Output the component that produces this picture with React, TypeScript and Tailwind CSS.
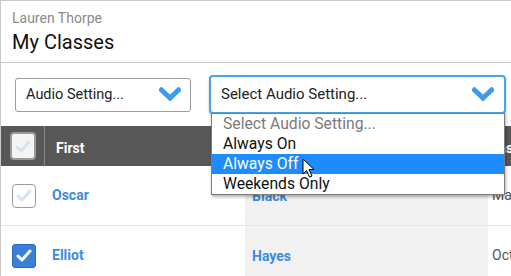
import React from "react";

const FONT = { fontFamily: "Roboto, 'Liberation Sans', sans-serif" };

function Chevron() {
  return (
    <svg width="22" height="15" viewBox="0 0 22 15" className="shrink-0">
      <polyline
        points="2.5,3 11,11 19.5,3"
        fill="none"
        stroke="#3d9be9"
        strokeWidth="5"
        strokeLinecap="square"
        strokeLinejoin="miter"
      />
    </svg>
  );
}

function Check({ color }: { color: string }) {
  return (
    <svg width="16" height="13" viewBox="0 0 16 13">
      <polyline
        points="2,7 6,11 14,2"
        fill="none"
        stroke={color}
        strokeWidth="3"
        strokeLinecap="round"
        strokeLinejoin="round"
      />
    </svg>
  );
}

function Box({ checked, header }: { checked?: boolean; header?: boolean }) {
  if (checked) {
    return (
      <div className="flex h-[24px] w-[24px] items-center justify-center rounded-[3px] border border-[#2d67b8] bg-[#3a7fd9]">
        <Check color="#ffffff" />
      </div>
    );
  }
  return (
    <div
      className={`flex items-center justify-center rounded-[4px] border-[#9a9a9a] ${
        header ? "h-[28px] w-[26px] border-[2px] bg-[#f4f4f4]" : "h-[24px] w-[24px] border bg-white"
      }`}
    >
      <Check color="#d3e3f8" />
    </div>
  );
}

function Cursor() {
  return (
    <svg width="14" height="21" viewBox="0 0 14 21" className="absolute left-[301px] top-[157px]">
      <path
        d="M1 1 L1 16 L4.5 12.5 L7.5 19 L10 18 L7 11.5 L12 11.5 Z"
        fill="#ffffff"
        stroke="#000000"
        strokeWidth="1"
        strokeLinejoin="miter"
      />
    </svg>
  );
}

const rows = [
  { first: "Oscar", last: "Black", other: "Ma", checked: false },
  { first: "Elliot", last: "Hayes", other: "Oct", checked: true },
];

const options = ["Always On", "Always Off", "Weekends Only"];

export default function App() {
  return (
    <div className="relative h-[276px] w-[511px] overflow-hidden border-l border-t border-[#c9c9c9] bg-white" style={FONT}>
      <div className="px-[11px] pb-[7px] pt-[8px]">
        <div className="text-[14px] leading-[18px] text-[#8a8a8a]">Lauren Thorpe</div>
        <div className="mt-[2px] text-[20px] leading-[26px] text-[#111]">My Classes</div>
      </div>
      <div className="h-px bg-[#cbcbcb]" />

      <div className="flex h-[63px] items-center gap-[18px] pl-[14px]">
        <div className="flex h-[34px] w-[176px] items-center justify-between rounded-[3px] border border-[#9c9c9c] pl-[10px] pr-[9px] text-[14.5px] text-[#222]">
          <span>Audio Setting...</span>
          <Chevron />
        </div>
        <div className="flex h-[39px] w-[297px] items-center justify-between rounded-[4px] border-[2px] border-[#4ba3ea] pl-[10px] pr-[10px] text-[15px] text-[#222] shadow-[0_1px_2px_rgba(0,0,0,0.35)]">
          <span>Select Audio Setting...</span>
          <Chevron />
        </div>
      </div>

      <div className="grid h-[40px] grid-cols-[44px_200px_243px_1fr] items-center bg-[#575757] text-[14px] font-bold text-white">
        <div className="flex h-full items-center justify-center border-r border-[#8a8a8a] pl-[1px]">
          <Box header />
        </div>
        <div className="pl-[11px] pt-[5px]">First</div>
        <div />
        <div className="pl-[3px] pt-[5px]">Last</div>
      </div>

      {rows.map((r) => (
        <div
          key={r.first}
          className="grid h-[60px] grid-cols-[44px_200px_243px_1fr] border-b border-[#e4e4e4] text-[14px]"
        >
          <div className="flex items-center justify-center pl-[2px]">
            <Box checked={r.checked} />
          </div>
          <div className="flex items-center pl-[7px] font-bold text-[#3d8ae0]">{r.first}</div>
          <div className="flex items-center bg-[#f1f1f1] pl-[7px] pt-[2px] font-bold text-[#3d8ae0]">{r.last}</div>
          <div className="flex items-center pl-[4px] text-[#555]">{r.other}</div>
        </div>
      ))}

      <div className="absolute left-[210px] top-[112px] w-[294px] border border-[#7d7d7d] bg-white text-[15.7px] leading-[20px] shadow-[1px_2px_3px_rgba(0,0,0,0.3)]">
        <div className="px-[11px] text-[#7a7a7a]">Select Audio Setting...</div>
        {options.map((o) => (
          <div
            key={o}
            className={`px-[11px] ${o === "Always Off" ? "bg-[#1e8bff] text-white" : "text-[#111]"}`}
          >
            {o}
          </div>
        ))}
      </div>
      <Cursor />
    </div>
  );
}
